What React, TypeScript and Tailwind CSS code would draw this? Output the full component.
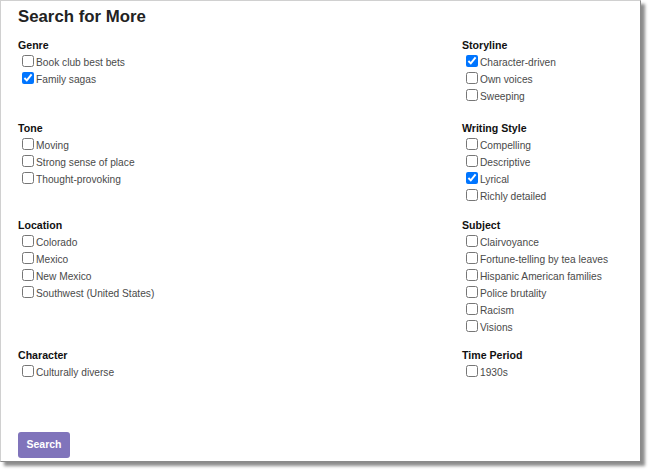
import React from "react";

type Section = { title: string; items: string[]; checked?: string[] };

const rows: { mt: string; left: Section; right: Section }[] = [
  {
    mt: "mt-[10px]",
    left: { title: "Genre", items: ["Book club best bets", "Family sagas"], checked: ["Family sagas"] },
    right: {
      title: "Storyline",
      items: ["Character-driven", "Own voices", "Sweeping"],
      checked: ["Character-driven"],
    },
  },
  {
    mt: "mt-[15px]",
    left: { title: "Tone", items: ["Moving", "Strong sense of place", "Thought-provoking"] },
    right: {
      title: "Writing Style",
      items: ["Compelling", "Descriptive", "Lyrical", "Richly detailed"],
      checked: ["Lyrical"],
    },
  },
  {
    mt: "mt-[12px]",
    left: {
      title: "Location",
      items: ["Colorado", "Mexico", "New Mexico", "Southwest (United States)"],
    },
    right: {
      title: "Subject",
      items: [
        "Clairvoyance",
        "Fortune-telling by tea leaves",
        "Hispanic American families",
        "Police brutality",
        "Racism",
        "Visions",
      ],
    },
  },
  {
    mt: "mt-[11px]",
    left: { title: "Character", items: ["Culturally diverse"] },
    right: { title: "Time Period", items: ["1930s"] },
  },
];

const Group = ({ section }: { section: Section }) => (
  <div>
    <div className="h-[17px] leading-[17px] text-[10.6px] font-bold text-[#111]">{section.title}</div>
    {section.items.map((item) => (
      <label key={item} className="flex h-[17px] items-center text-[10.2px] text-[#4a4a4a]">
        <input
          type="checkbox"
          defaultChecked={section.checked?.includes(item)}
          className="relative -top-[2px] m-0 ml-[4px] mr-[2px] h-[12px] w-[12px] accent-[#0075ff]"
        />
        <span className="leading-[17px]">{item}</span>
      </label>
    ))}
  </div>
);

export default function App() {
  return (
    <div className="h-[472px] w-[650px] bg-white" style={{ fontFamily: '"Liberation Sans", Arial, sans-serif' }}>
      <div className="h-[462px] w-[641px] border border-t-[#d0d0d0] border-l-[#d0d0d0] border-r-[#8a8a8a] border-b-[#8a8a8a] bg-white px-[17px] pt-[6px] shadow-[4px_4px_3px_rgba(0,0,0,0.45)]">
        <h1 className="h-[20px] text-[16.8px] font-bold leading-[20px] text-[#222]">Search for More</h1>
        {rows.map((row) => (
          <div key={row.left.title} className={`grid grid-cols-[444px_1fr] ${row.mt}`}>
            <Group section={row.left} />
            <Group section={row.right} />
          </div>
        ))}
        <button className="mt-[51px] h-[26px] w-[52px] rounded-[3px] bg-[#8074bb] text-[10.5px] font-bold text-white">
          Search
        </button>
      </div>
    </div>
  );
}
